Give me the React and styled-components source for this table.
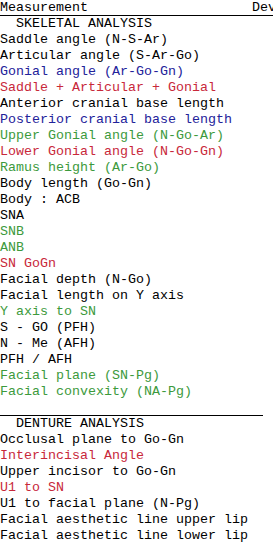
import React from 'react';
import styled, { createGlobalStyle } from 'styled-components';

const GlobalStyle = createGlobalStyle`
  html, body {
    margin: 0;
    padding: 0;
    background: #fff;
  }
  body {
    font-family: "Liberation Mono", "Courier New", monospace;
    font-size: 13.33px;
    color: #000;
    overflow: hidden;
  }
`;

const COLORS = {
  black: '#000000',
  blue: '#22229a',
  red: '#c8283a',
  green: '#3c9a3c',
};

const Grid = styled.div`
  width: 273px;
  height: 543px;
  overflow: hidden;
`;

const HeaderRow = styled.div`
  display: flex;
  height: 15px;
  border-bottom: 1px solid #000;
  line-height: 15px;
  white-space: pre;
`;

const HeaderCell = styled.div`
  width: ${props => props.width || 'auto'};
  flex: ${props => props.width ? 'none' : '1'};
  padding-left: ${props => props.pad || 0}px;
  overflow: hidden;
`;

const Row = styled.div`
  height: 16px;
  line-height: 16px;
  white-space: pre;
  color: ${props => COLORS[props.tone] || COLORS.black};
`;

const Separator = styled.div`
  height: 15px;
  width: 263px;
  border-bottom: 1px solid #000;
`;

const skeletal = [
  ['  SKELETAL ANALYSIS', 'black'],
  ['Saddle angle (N-S-Ar)', 'black'],
  ['Articular angle (S-Ar-Go)', 'black'],
  ['Gonial angle (Ar-Go-Gn)', 'blue'],
  ['Saddle + Articular + Gonial', 'red'],
  ['Anterior cranial base length', 'black'],
  ['Posterior cranial base length', 'blue'],
  ['Upper Gonial angle (N-Go-Ar)', 'green'],
  ['Lower Gonial angle (N-Go-Gn)', 'red'],
  ['Ramus height (Ar-Go)', 'green'],
  ['Body length (Go-Gn)', 'black'],
  ['Body : ACB', 'black'],
  ['SNA', 'black'],
  ['SNB', 'green'],
  ['ANB', 'green'],
  ['SN GoGn', 'red'],
  ['Facial depth (N-Go)', 'black'],
  ['Facial length on Y axis', 'black'],
  ['Y axis to SN', 'green'],
  ['S - GO (PFH)', 'black'],
  ['N - Me (AFH)', 'black'],
  ['PFH / AFH', 'black'],
  ['Facial plane (SN-Pg)', 'green'],
  ['Facial convexity (NA-Pg)', 'green'],
];

const denture = [
  ['  DENTURE ANALYSIS', 'black'],
  ['Occlusal plane to Go-Gn', 'black'],
  ['Interincisal Angle', 'red'],
  ['Upper incisor to Go-Gn', 'black'],
  ['U1 to SN', 'red'],
  ['U1 to facial plane (N-Pg)', 'black'],
  ['Facial aesthetic line upper lip', 'black'],
  ['Facial aesthetic line lower lip', 'black'],
];

const App = () => (
  <>
    <GlobalStyle />
    <Grid>
      <HeaderRow>
        <HeaderCell width="252px">Measurement</HeaderCell>
        <HeaderCell>Dev</HeaderCell>
      </HeaderRow>
      {skeletal.map(([label, tone]) => (
        <Row key={label} tone={tone}>{label}</Row>
      ))}
      <Separator />
      {denture.map(([label, tone]) => (
        <Row key={label} tone={tone}>{label}</Row>
      ))}
    </Grid>
  </>
);

export default App;
